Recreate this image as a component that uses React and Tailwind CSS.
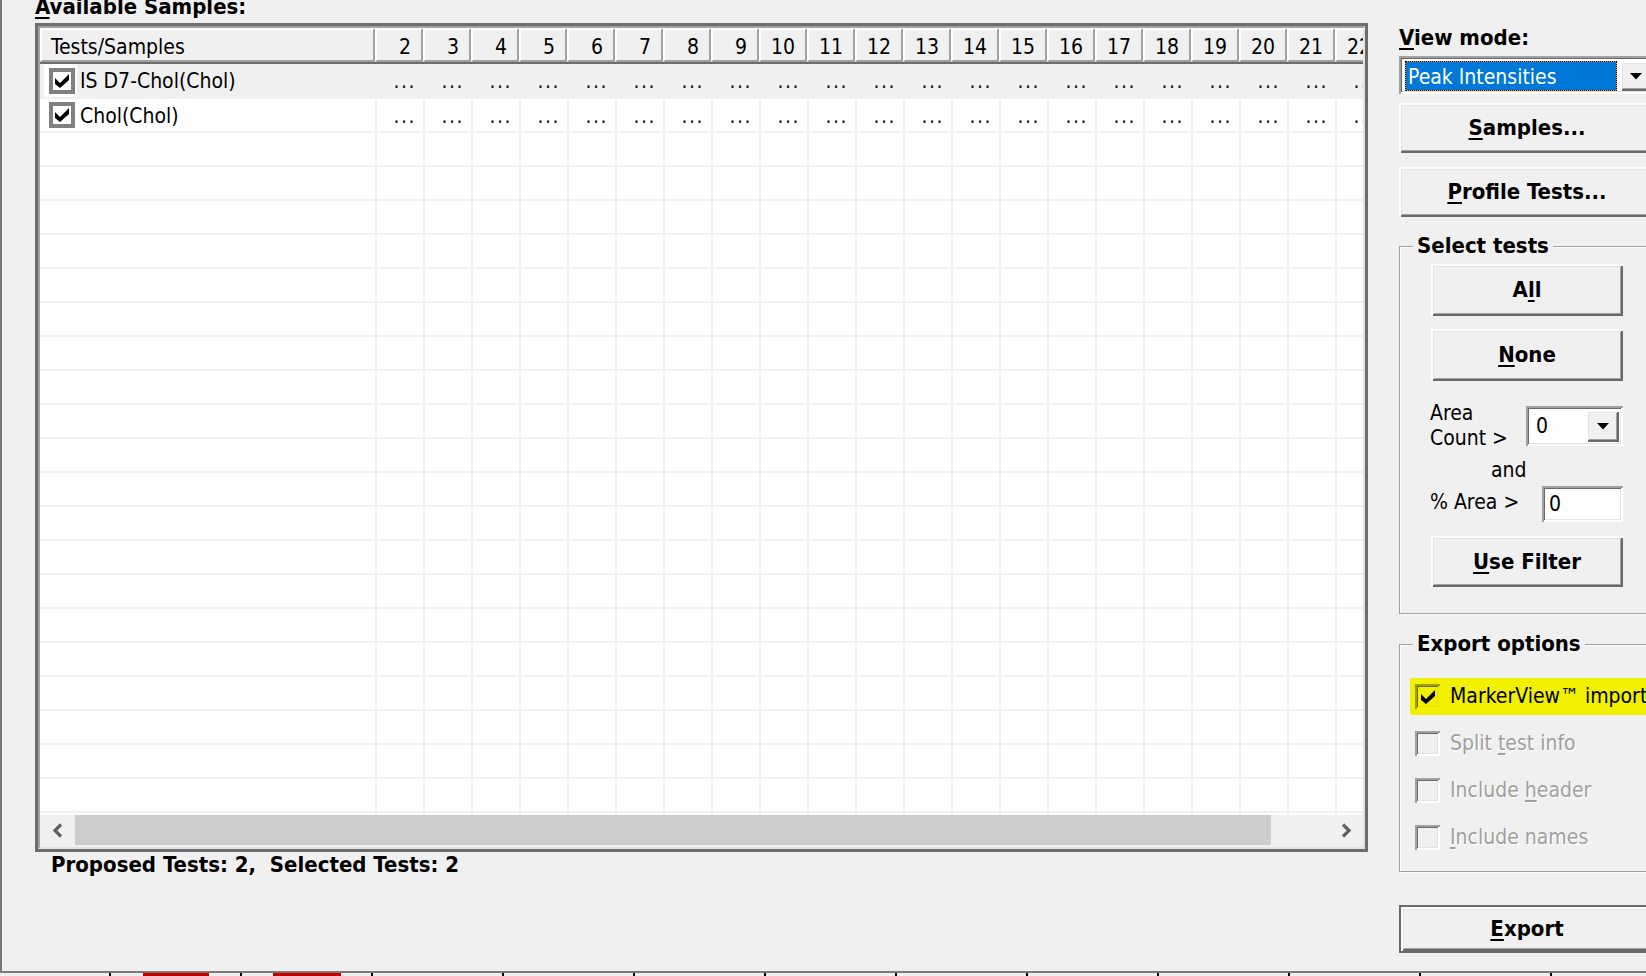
import React from 'react'

const raised = 'bg-[#f0f0f0] shadow-[inset_2px_2px_0_#ffffff,inset_-2px_-2px_0_#696969,inset_3px_3px_0_#e3e3e3,inset_-3px_-3px_0_#a0a0a0]'
const sunken = 'shadow-[inset_2px_2px_0_#a0a0a0,inset_-2px_-2px_0_#ffffff,inset_3px_3px_0_#696969,inset_-3px_-3px_0_#e3e3e3]'
const etched = 'border border-[#a0a0a0] shadow-[inset_1px_1px_0_#ffffff,1px_1px_0_#ffffff]'
const disabledText = 'text-[#a0a0a0] [text-shadow:1px_1px_0_#ffffff]'

const cols = Array.from({ length: 21 }, (_, i) => i + 2)
const tests = [
    { name: 'IS D7-Chol(Chol)', selected: true },
    { name: 'Chol(Chol)', selected: false },
]
const blankRows = Array.from({ length: 21 }, (_, i) => i)

function U({ children }) {
    return <span className="underline decoration-2 underline-offset-[3px]">{children}</span>
}

function CheckMark() {
    return (
        <svg width="14" height="14" viewBox="0 0 7 7">
            <polygon points="0,2 2.5,4.5 7,0 7,3 2.5,7 0,5" fill="#000" />
        </svg>
    )
}

function DownArrow() {
    return (
        <svg width="12" height="7" viewBox="0 0 12 7">
            <polygon points="0,0 12,0 6,6.5" fill="#000" />
        </svg>
    )
}

function Chevron({ dir }) {
    return (
        <svg width="12" height="15" viewBox="0 0 12 15">
            <polyline
                points={dir === 'left' ? '9,1.5 3,7.5 9,13.5' : '3,1.5 9,7.5 3,13.5'}
                fill="none"
                stroke="#606060"
                strokeWidth="3.2"
            />
        </svg>
    )
}

function WinButton({ children, className = '' }) {
    return (
        <button type="button" className={`${raised} flex items-center justify-center font-bold text-[22px] leading-[24px] ${className}`}>
            {children}
        </button>
    )
}

function GridCheck() {
    return (
        <div className="w-[26px] h-[26px] border-[4px] border-[#808080] bg-white flex items-center justify-center">
            <CheckMark />
        </div>
    )
}

function OptionRow({ label, checked, disabled, highlight }) {
    const box = highlight
        ? 'bg-[#f0f000] shadow-[inset_2px_2px_0_#a0a000,inset_-2px_-2px_0_#f0f000,inset_3px_3px_0_#696900,inset_-3px_-3px_0_#e3e300]'
        : `bg-[#f0f0f0] ${sunken}`
    return (
        <div className="h-[47px] flex items-center pl-[10px]">
            <div className={`h-[37px] flex-1 flex items-center gap-[10px] pl-[5px] ${highlight ? 'bg-[#f0f000] rounded-[2px]' : ''}`}>
                <div className={`w-[25px] h-[25px] shrink-0 flex items-center justify-center ${box}`}>
                    {checked && <CheckMark />}
                </div>
                <span className={`whitespace-nowrap text-[21px] leading-[25px] ${disabled ? disabledText : ''}`}>{label}</span>
            </div>
        </div>
    )
}

function SamplesGrid() {
    const hdr = 'shrink-0 h-full flex border-2 border-t-white border-l-white border-r-[#a0a0a0] border-b-[#a0a0a0] pt-[5px] leading-[24px]'
    return (
        <div className="h-[829px] border-[3px] border-[#6d6d6d]">
            <div className="h-full flex flex-col border-2 border-t-[#a0a0a0] border-l-[#a0a0a0] border-r-[#e3e3e3] border-b-[#e3e3e3] bg-[#f0f0f0] overflow-hidden">
                <div className="flex h-[36px] shrink-0 border-b-2 border-[#6d6d6d]">
                    <div className={`${hdr} w-[335px] pl-[9px]`}>Tests/Samples</div>
                    {cols.map((c) => (
                        <div key={c} className={`${hdr} w-[48px] justify-end pr-[10px]`}>{c}</div>
                    ))}
                </div>

                <div className="flex-1 overflow-hidden bg-white">
                    {tests.map((t, i) => (
                        <div key={t.name} className={`flex ${i === 0 ? 'h-[35px]' : 'h-[34px]'} border-b-2 border-[#f0f0f0] ${t.selected ? 'bg-[#f0f0f0]' : ''}`}>
                            <div className="w-[335px] shrink-0 flex items-center pl-[4px]">
                                <div className={`w-[33px] h-[33px] flex items-center pl-[5px] ${t.selected ? 'bg-white' : ''}`}>
                                    <GridCheck />
                                </div>
                                <span className="ml-[3px] self-start pt-[5px] leading-[24px] whitespace-nowrap">{t.name}</span>
                            </div>
                            {cols.map((c) => (
                                <div key={c} className="w-[48px] shrink-0 flex justify-end border-l-2 border-[#f0f0f0] pr-[7px] pt-[5px] leading-[24px] tracking-[1.5px] text-[#1a1030]">
                                    ...
                                </div>
                            ))}
                        </div>
                    ))}
                    {blankRows.map((r) => (
                        <div key={r} className="flex h-[34px] border-b-2 border-[#f0f0f0]">
                            <div className="w-[335px] shrink-0" />
                            {cols.map((c) => (
                                <div key={c} className="w-[48px] shrink-0 border-l-2 border-[#f0f0f0]" />
                            ))}
                        </div>
                    ))}
                </div>

                <div className="flex h-[30px] shrink-0">
                    <div className="w-[35px] flex items-center justify-center"><Chevron dir="left" /></div>
                    <div className="flex-1 flex">
                        <div className="w-[1196px] bg-[#cdcdcd]" />
                    </div>
                    <div className="w-[35px] flex items-center justify-center"><Chevron dir="right" /></div>
                </div>
                <div className="h-[2px] shrink-0" />
            </div>
        </div>
    )
}

export default function App() {
    return (
        <div className="w-[1646px] h-[976px] overflow-hidden bg-[#f0f0f0] text-black text-[21px] font-['DejaVu_Sans_Condensed','DejaVu_Sans',sans-serif]">
            <div className="h-[973px] flex border-l-2 border-b-2 border-[#7a7a7a]">
                {/* left: samples grid */}
                <div className="w-[1333px] ml-[33px] shrink-0 flex flex-col">
                    <div className="mt-[-5px] h-[24px] leading-[24px] text-[22px] font-bold whitespace-nowrap">
                        <U>A</U>vailable Samples:
                    </div>
                    <div className="mt-[4px]">
                        <SamplesGrid />
                    </div>
                    <div className="mt-[1px] pl-[16px] h-[24px] leading-[24px] text-[22px] font-bold whitespace-pre">
                        Proposed Tests: 2,  Selected Tests: 2
                    </div>
                </div>

                {/* right: controls */}
                <div className="w-[256px] ml-[31px] shrink-0 flex flex-col">
                    <div className="mt-[26px] h-[24px] leading-[24px] text-[22px] font-bold whitespace-nowrap">
                        <U>V</U>iew mode:
                    </div>
                    <div className={`mt-[6px] h-[38px] bg-white ${sunken} flex pl-[6px] pt-[5px] pb-[3px] pr-[3px]`}>
                        <div className="w-[212px] h-full border border-dotted border-black bg-[#f5a040]">
                            <div className="h-full bg-[#0078d7] text-white pl-[2px] pt-[2px] leading-[26px] whitespace-nowrap">Peak Intensities</div>
                        </div>
                        <div className={`ml-[3px] w-[32px] shrink-0 ${raised} flex items-center justify-center`}>
                            <DownArrow />
                        </div>
                    </div>

                    <WinButton className="mt-[9px] h-[50px]"><U>S</U>amples...</WinButton>
                    <WinButton className="mt-[14px] h-[50px]"><U>P</U>rofile Tests...</WinButton>

                    <fieldset className={`mt-[17px] ${etched} pb-[26px]`}>
                        <legend className="ml-[13px] px-[4px] bg-[#f0f0f0] text-[22px] font-bold leading-[24px] whitespace-nowrap">Select tests</legend>
                        <WinButton className="mt-[6px] ml-[31px] w-[192px] h-[52px]">A<U>l</U>l</WinButton>
                        <WinButton className="mt-[13px] ml-[31px] w-[192px] h-[52px]"><U>N</U>one</WinButton>

                        <div className="mt-[20px] ml-[30px] flex items-start">
                            <div className="w-[96px] leading-[25px]">Area<br />Count &gt;</div>
                            <div className={`mt-[5px] w-[97px] h-[40px] bg-white ${sunken} flex items-center pl-[10px] pr-[4px]`}>
                                <span className="flex-1 leading-[25px]">0</span>
                                <div className={`w-[33px] h-[32px] ${raised} flex items-center justify-center`}>
                                    <DownArrow />
                                </div>
                            </div>
                        </div>
                        <div className="mt-[7px] ml-[91px] leading-[25px]">and</div>
                        <div className="mt-[3px] ml-[30px] h-[36px] flex items-center">
                            <div className="w-[112px] leading-[25px] whitespace-nowrap pb-[3px]">% Area &gt;</div>
                            <div className={`w-[81px] h-[36px] bg-white ${sunken} flex items-center pl-[7px] leading-[25px]`}>0</div>
                        </div>
                        <WinButton className="mt-[14px] ml-[31px] w-[192px] h-[51px]"><U>U</U>se Filter</WinButton>
                    </fieldset>

                    <fieldset className={`mt-[18px] ${etched} pb-[10px]`}>
                        <legend className="ml-[13px] px-[4px] bg-[#f0f0f0] text-[22px] font-bold leading-[24px] whitespace-nowrap">Export options</legend>
                        <div className="mt-[17px]">
                            <OptionRow label="MarkerView™ import" checked highlight />
                            <OptionRow label={<>Split <U>t</U>est info</>} disabled />
                            <OptionRow label={<>Include <U>h</U>eader</>} disabled />
                            <OptionRow label={<><U>I</U>nclude names</>} disabled />
                        </div>
                    </fieldset>

                    <WinButton className="mt-[33px] h-[48px] border-2 border-[#696969]"><U>E</U>xport</WinButton>
                </div>
            </div>

            {/* strip of the window underneath */}
            <div className="h-[3px] flex pl-[109px]">
                <div className="w-[131px] shrink-0 border-l-2 border-black flex">
                    <div className="ml-[32px] w-[66px] bg-[#c40000]" />
                </div>
                <div className="w-[131px] shrink-0 border-l-2 border-black flex">
                    <div className="ml-[31px] w-[68px] bg-[#c40000]" />
                </div>
                {Array.from({ length: 10 }, (_, i) => (
                    <div key={i} className="w-[131px] shrink-0 border-l-2 border-black" />
                ))}
            </div>
        </div>
    )
}
